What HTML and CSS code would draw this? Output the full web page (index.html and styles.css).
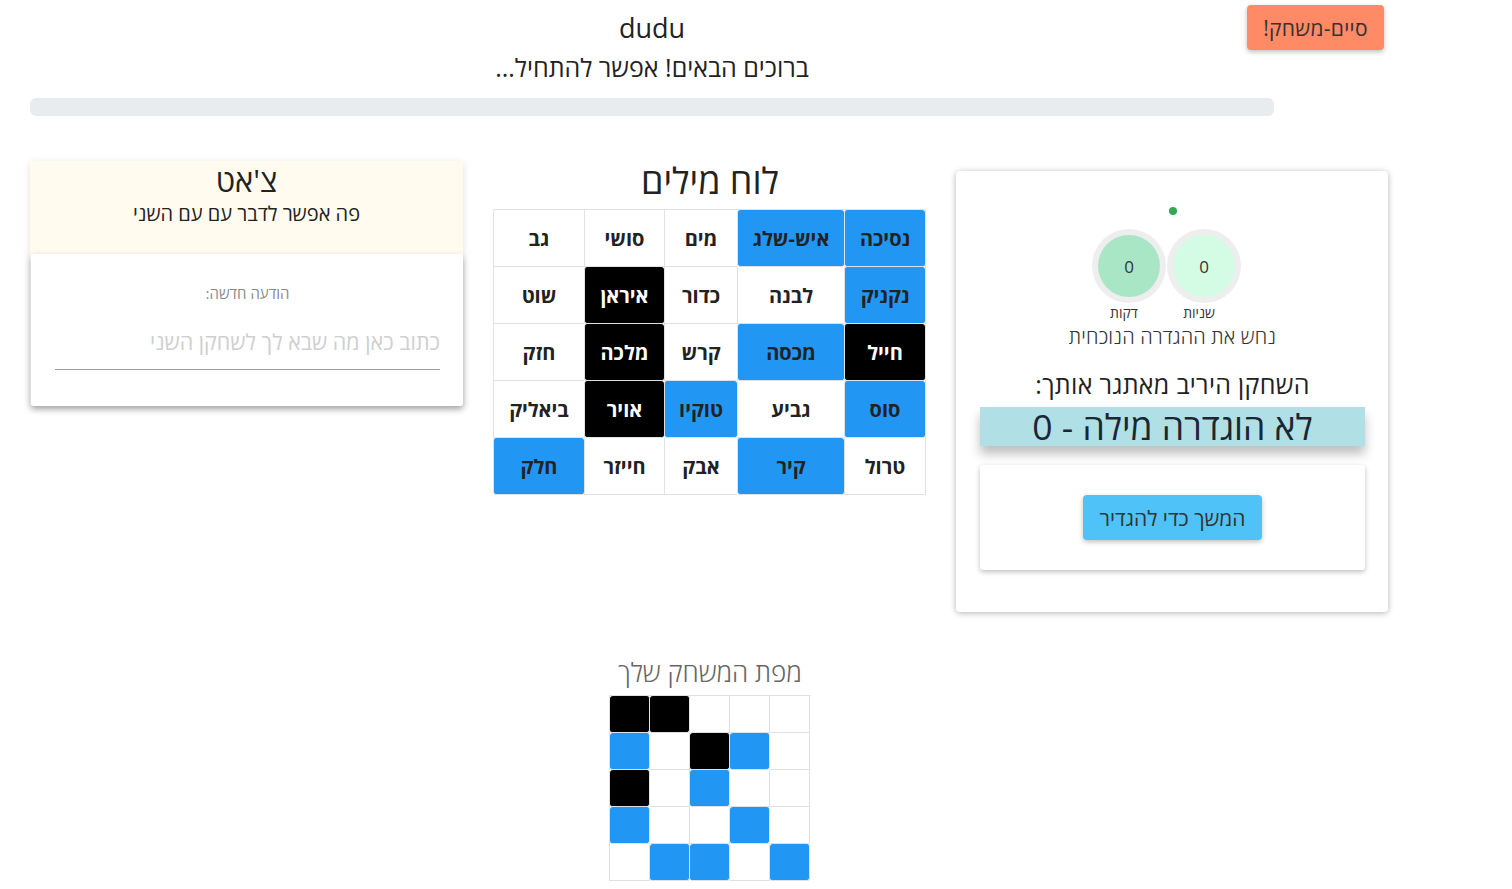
FILE: index.html
```html
<!DOCTYPE html>
<html lang="he">
<head>
<meta charset="utf-8">
<title>dudu</title>
<link rel="stylesheet" href="styles.css">
</head>
<body>
<div class="top">
  <div class="top-main">
    <h1 class="player">dudu</h1>
    <div class="welcome" dir="rtl">ברוכים הבאים! אפשר להתחיל...</div>
    <div class="progress"></div>
  </div>
  <button class="end-btn" dir="rtl">סיים-משחק!</button>
</div>

<div class="main">
  <section class="chat" dir="rtl">
    <div class="chat-head">
      <div class="chat-title">צ'אט</div>
      <div class="chat-sub">פה אפשר לדבר עם עם השני</div>
    </div>
    <div class="chat-body">
      <div class="chat-label">הודעה חדשה:</div>
      <input class="chat-input" type="text" placeholder="כתוב כאן מה שבא לך לשחקן השני">
    </div>
  </section>

  <section class="board-col" dir="rtl">
    <h2 class="board-title">לוח מילים</h2>
    <div class="board">
      <div class="cell blue">נסיכה</div>
      <div class="cell blue">איש-שלג</div>
      <div class="cell">מים</div>
      <div class="cell">סושי</div>
      <div class="cell">גב</div>

      <div class="cell blue">נקניק</div>
      <div class="cell">לבנה</div>
      <div class="cell">כדור</div>
      <div class="cell black">איראן</div>
      <div class="cell">שוט</div>

      <div class="cell black">חייל</div>
      <div class="cell blue">מכסה</div>
      <div class="cell">קרש</div>
      <div class="cell black">מלכה</div>
      <div class="cell">חזק</div>

      <div class="cell blue">סוס</div>
      <div class="cell">גביע</div>
      <div class="cell blue">טוקיו</div>
      <div class="cell black">אויר</div>
      <div class="cell">ביאליק</div>

      <div class="cell">טרול</div>
      <div class="cell blue">קיר</div>
      <div class="cell">אבק</div>
      <div class="cell">חייזר</div>
      <div class="cell blue">חלק</div>
    </div>

    <div class="map-title">מפת המשחק שלך</div>
    <div class="map">
      <div class="m black"></div><div class="m black"></div><div class="m"></div><div class="m"></div><div class="m"></div>
      <div class="m blue"></div><div class="m"></div><div class="m black"></div><div class="m blue"></div><div class="m"></div>
      <div class="m black"></div><div class="m"></div><div class="m blue"></div><div class="m"></div><div class="m"></div>
      <div class="m blue"></div><div class="m"></div><div class="m"></div><div class="m blue"></div><div class="m"></div>
      <div class="m"></div><div class="m blue"></div><div class="m blue"></div><div class="m"></div><div class="m blue"></div>
    </div>
  </section>

  <section class="game-card" dir="rtl">
    <div class="dot"></div>
    <div class="timers">
      <div class="timer">
        <div class="ring"><div class="face face-sec">0</div></div>
        <div class="timer-label">שניות</div>
      </div>
      <div class="timer">
        <div class="ring"><div class="face face-min">0</div></div>
        <div class="timer-label">דקות</div>
      </div>
    </div>
    <div class="guess">נחש את ההגדרה הנוכחית</div>
    <div class="challenge">השחקן היריב מאתגר אותך:</div>
    <div class="clue">לא הוגדרה מילה - 0</div>
    <div class="define-box">
      <button class="define-btn">המשך כדי להגדיר</button>
    </div>
  </section>
</div>
</body>
</html>
```

FILE: styles.css
```css
* { box-sizing: border-box; }

body {
  margin: 0;
  background: #ffffff;
  color: #222;
  font-family: "Open Sans", "DejaVu Sans", "Liberation Sans", sans-serif;
}

.top {
  display: flex;
  align-items: flex-start;
  padding-left: 30px;
}

.top-main {
  width: 1244px;
  text-align: center;
  padding-top: 12px;
}

.player {
  margin: 0;
  font-size: 27px;
  line-height: 31px;
  font-weight: 400;
  color: #222;
}

.welcome {
  margin-top: 11px;
  font-size: 25px;
  line-height: 26px;
  color: #222;
}

.progress {
  margin-top: 18px;
  height: 18px;
  border-radius: 6px;
  background: #e9ecef;
}

.end-btn {
  margin-left: -27px;
  margin-top: 5px;
  width: 137px;
  height: 45px;
  border: none;
  border-radius: 4px;
  background: #ff8a65;
  color: #333;
  font-family: inherit;
  font-size: 21px;
  letter-spacing: 0.3px;
  box-shadow: 0 2px 5px rgba(0, 0, 0, 0.25);
}

.main {
  display: flex;
  align-items: flex-start;
  padding-left: 30px;
  margin-top: 45px;
}

/* chat */
.chat {
  width: 433px;
  box-shadow: 0 2px 8px rgba(0, 0, 0, 0.12);
}

.chat-head {
  height: 93px;
  background: #fffcef;
  text-align: center;
  padding-top: 2px;
}

.chat-title {
  font-size: 31px;
  line-height: 34px;
  color: #222;
}

.chat-sub {
  margin-top: 6px;
  font-size: 20px;
  line-height: 22px;
  color: #222;
}

.chat-body {
  background: #fff;
  margin-left: 1px;
  border-radius: 3px;
  box-shadow: 0 3px 6px rgba(0, 0, 0, 0.3);
  padding: 30px 23px 36px 24px;
  text-align: center;
}

.chat-label {
  font-size: 15px;
  line-height: 18px;
  color: #8a8a8a;
}

.chat-input {
  display: block;
  width: 100%;
  height: 46px;
  margin-top: 22px;
  border: none;
  border-bottom: 1px solid #9e9e9e;
  outline: none;
  padding: 0 0 10px 0;
  font-family: inherit;
  font-size: 21.5px;
  color: #333;
  background: transparent;
  direction: rtl;
}

.chat-input::placeholder {
  color: #cfcfcf;
}

/* board */
.board-col {
  width: 432px;
  margin-left: 31px;
}

.board-title {
  margin: 0;
  text-align: center;
  font-size: 36px;
  line-height: 40px;
  font-weight: 400;
  color: #222;
}

.board {
  margin-top: 8px;
  display: grid;
  grid-template-columns: 81px 107px 73px 80px 91px;
  grid-auto-rows: 57px;
  border-top: 1px solid #dee2e6;
  border-right: 1px solid #dee2e6;
}

.cell {
  display: flex;
  align-items: center;
  justify-content: center;
  border-left: 1px solid #dee2e6;
  border-bottom: 1px solid #dee2e6;
  font-size: 20px;
  font-weight: 700;
  color: #222;
}

.cell.blue {
  background: #2196f3;
  border-radius: 3px;
}

.cell.black {
  background: #000;
  color: #fff;
  border-radius: 3px;
}

.map-title {
  margin-top: 162px;
  text-align: center;
  font-size: 26px;
  line-height: 30px;
  font-weight: 300;
  color: #666;
}

.map {
  direction: ltr;
  margin: 8px auto 0;
  width: 202px;
  display: grid;
  grid-template-columns: repeat(5, 40px);
  grid-auto-rows: 37px;
  border-top: 1px solid #dee2e6;
  border-left: 1px solid #dee2e6;
}

.m {
  border-right: 1px solid #dee2e6;
  border-bottom: 1px solid #dee2e6;
}

.m.blue { background: #2196f3; border-radius: 3px; }
.m.black { background: #000; border-radius: 3px; }

/* game card */
.game-card {
  width: 432px;
  margin-left: 30px;
  margin-top: 10px;
  background: #fff;
  border-radius: 4px;
  box-shadow: 0 1px 6px rgba(0, 0, 0, 0.3);
  padding: 36px 23px 42px 24px;
  text-align: center;
}

.dot {
  width: 8px;
  height: 8px;
  border-radius: 50%;
  background: #34a853;
  margin: 0 auto;
}

.timers {
  display: flex;
  justify-content: center;
  gap: 1px;
  margin-top: 14px;
  padding-right: 12px;
}

.timer {
  width: 74px;
}

.ring {
  width: 74px;
  height: 74px;
  border-radius: 50%;
  background: #eeeeee;
  padding: 6px;
}

.face {
  width: 62px;
  height: 62px;
  border-radius: 50%;
  display: flex;
  align-items: center;
  justify-content: center;
  font-size: 17px;
  color: #333;
}

.face-sec { background: #d4fbe3; }
.face-min { background: #a9e6c6; }

.timer-label {
  margin-top: 2px;
  font-size: 14px;
  line-height: 16px;
  color: #333;
  padding-right: 10px;
}

.guess {
  margin-top: 5px;
  font-size: 20px;
  line-height: 22px;
  font-weight: 300;
  letter-spacing: 0.2px;
  color: #333;
}

.challenge {
  margin-top: 22px;
  font-size: 25px;
  line-height: 28px;
  letter-spacing: 0.3px;
  color: #222;
}

.clue {
  margin-top: 9px;
  height: 39px;
  background: #b0dfe5;
  font-size: 35.5px;
  line-height: 39px;
  color: #1c2533;
  box-shadow: 0 8px 10px rgba(0, 0, 0, 0.25);
}

.define-box {
  margin-top: 19px;
  height: 105px;
  background: #fff;
  border-radius: 3px;
  box-shadow: 0 2px 5px rgba(0, 0, 0, 0.25);
  padding-top: 30px;
}

.define-btn {
  width: 179px;
  height: 45px;
  border: none;
  border-radius: 4px;
  background: #4fc3f7;
  color: #333;
  font-family: inherit;
  font-size: 21px;
  box-shadow: 0 2px 5px rgba(0, 0, 0, 0.25);
}
```
